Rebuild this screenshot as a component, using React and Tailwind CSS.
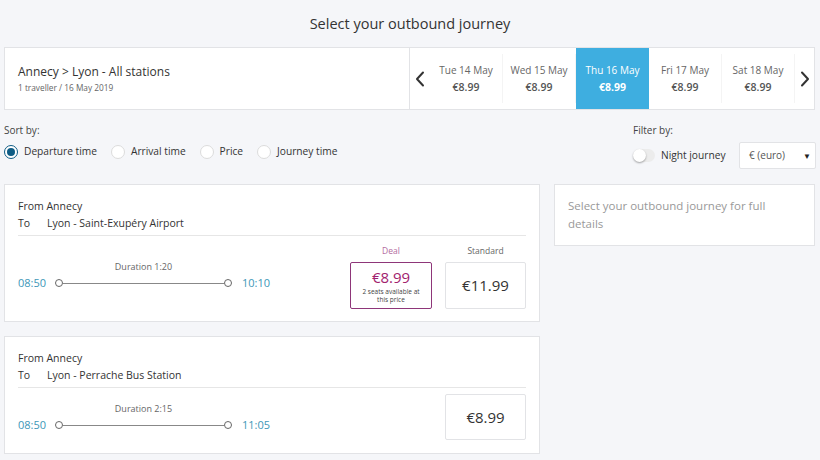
import React from "react";

const dates = [
  { d: "Tue 14 May", p: "€8.99" },
  { d: "Wed 15 May", p: "€8.99" },
  { d: "Thu 16 May", p: "€8.99", active: true },
  { d: "Fri 17 May", p: "€8.99" },
  { d: "Sat 18 May", p: "€8.99" },
];

function Chevron({ dir }) {
  return (
    <svg width="10" height="16" viewBox="0 0 10 16" fill="none">
      {dir === "left" ? (
        <polyline points="8,1.5 2,8 8,14.5" stroke="#333" strokeWidth="2" strokeLinecap="round" strokeLinejoin="round" />
      ) : (
        <polyline points="2,1.5 8,8 2,14.5" stroke="#333" strokeWidth="2" strokeLinecap="round" strokeLinejoin="round" />
      )}
    </svg>
  );
}

function Radio({ checked, label }) {
  return (
    <div className="flex items-center">
      {checked ? (
        <span className="w-[14px] h-[14px] rounded-full border-[1.5px] border-[#0e5c85] bg-white flex items-center justify-center">
          <span className="w-[8px] h-[8px] rounded-full bg-[#0e5c85]" />
        </span>
      ) : (
        <span className="w-[14px] h-[14px] rounded-full border border-[#dcdcdc] bg-white" />
      )}
      <span className="ml-[6px] text-[10.2px] text-[#333]">{label}</span>
    </div>
  );
}

function Timeline({ dep, arr, dur, mt }) {
  return (
    <div className={`self-start flex items-end ${mt}`}>
      <span className="text-[11px] leading-[12px] text-[#3d97b8] w-[37px]">{dep}</span>
      <div className="flex flex-col items-center">
        <span className="text-[9px] leading-[12px] text-[#666] mb-[4px]">{dur}</span>
        <div className="flex items-center h-[12px]">
          <span className="w-[8px] h-[8px] rounded-full border border-[#666] bg-white" />
          <span className="w-[161px] h-px bg-[#888]" />
          <span className="w-[8px] h-[8px] rounded-full border border-[#666] bg-white" />
        </div>
      </div>
      <span className="text-[11px] leading-[12px] text-[#3d97b8] ml-[10px]">{arr}</span>
    </div>
  );
}

function CardHead({ to }) {
  return (
    <>
      <div className="text-[10.5px] leading-[15px] text-[#333]">From Annecy</div>
      <div className="mt-[2px] text-[10.5px] leading-[15px] text-[#333] flex">
        <span className="w-[29px]">To</span>
        <span>{to}</span>
      </div>
      <div className="mt-[4px] h-px bg-[#e6e6e6]" />
    </>
  );
}

export default function App() {
  return (
    <div
      className="w-[820px] h-[460px] overflow-hidden bg-[#f5f6f9] text-[#333]"
      style={{ fontFamily: '"Open Sans", "Noto Sans", sans-serif' }}
    >
      <div className="h-[47px] flex items-center justify-center text-[14.5px] text-[#333]">
        Select your outbound journey
      </div>

      <div className="ml-[4px] w-[811px] h-[63px] flex border border-[#e2e3e6] bg-white">
        <div className="flex-1 flex flex-col justify-center pl-[13px]">
          <div className="text-[12px] leading-[16px] text-[#333]">Annecy &gt; Lyon - All stations</div>
          <div className="mt-[2px] text-[8.3px] leading-[12px] text-[#666]">1 traveller / 16 May 2019</div>
        </div>
        <div className="w-[405px] border-l border-[#e2e3e6] flex items-stretch">
          <div className="w-[20px] flex items-center justify-center">
            <Chevron dir="left" />
          </div>
          {dates.map((x, i) =>
            x.active ? (
              <div key={i} className="w-[73px] bg-[#3eaee0] flex flex-col items-center justify-center text-white">
                <span className="text-[10px] leading-[14px]">{x.d}</span>
                <span className="mt-[3px] text-[10.5px] leading-[14px] font-bold">{x.p}</span>
              </div>
            ) : (
              <div key={i} className="w-[73px] flex flex-col items-center justify-center py-[6px]">
                <div className="flex flex-col items-center justify-center w-full h-full border-r border-[#f4f4f4]">
                  <span className="text-[10px] leading-[14px] text-[#666]">{x.d}</span>
                  <span className="mt-[3px] text-[10.5px] leading-[14px] font-semibold text-[#555]">{x.p}</span>
                </div>
              </div>
            )
          )}
          <div className="flex-1 flex items-center justify-start pl-[5px]">
            <Chevron dir="right" />
          </div>
        </div>
      </div>

      <div className="h-[74px] flex justify-between px-[4px]">
        <div className="pt-[13px]">
          <div className="text-[10px] leading-[14px] text-[#444]">Sort by:</div>
          <div className="mt-[7px] flex items-center gap-[14px]">
            <Radio checked label="Departure time" />
            <Radio label="Arrival time" />
            <Radio label="Price" />
            <Radio label="Journey time" />
          </div>
        </div>
        <div className="pt-[13px] w-[183px]">
          <div className="text-[10px] leading-[14px] text-[#444]">Filter by:</div>
          <div className="mt-[5px] flex items-center h-[27px]">
            <span className="w-[22px] h-[13px] rounded-full bg-[#ececec] relative flex items-center">
              <span className="w-[13px] h-[13px] rounded-full bg-white shadow-[0_1px_2px_rgba(0,0,0,0.35)]" />
            </span>
            <span className="ml-[6px] text-[10.2px] text-[#333]">Night journey</span>
            <div className="ml-auto w-[77px] h-[27px] border border-[#e2e3e6] bg-white rounded-[2px] flex items-center pl-[9px] pr-[4px]">
              <span className="text-[10px] text-[#555]">€ (euro)</span>
              <span className="ml-auto text-[8px] text-[#222]">▼</span>
            </div>
          </div>
        </div>
      </div>

      <div className="flex px-[4px] gap-[14px]">
        <div className="w-[536px] flex flex-col gap-[14px]">
          <div className="bg-white border border-[#e2e3e6] pt-[14px] px-[13px] pb-[12px]">
            <CardHead to="Lyon - Saint-Exupéry Airport" />
            <div className="flex justify-between">
              <Timeline dep="08:50" arr="10:10" dur="Duration 1:20" mt="mt-[25px]" />
              <div className="flex gap-[13px]">
                <div className="flex flex-col items-center">
                  <span className="mt-[9px] text-[8.5px] leading-[12px] text-[#b36ca0]">Deal</span>
                  <div className="mt-[5px] w-[82px] h-[47px] border border-[#8e3679] rounded-[2px] flex flex-col items-center pt-[6px]">
                    <span className="text-[15px] leading-[17px] text-[#a1226e]">€8.99</span>
                    <span className="mt-[2px] text-[6.5px] leading-[7.5px] text-[#444] text-center">
                      2 seats available at<br />this price
                    </span>
                  </div>
                </div>
                <div className="flex flex-col items-center">
                  <span className="mt-[9px] text-[8.5px] leading-[12px] text-[#666]">Standard</span>
                  <div className="mt-[5px] w-[81px] h-[47px] border border-[#e2e3e6] rounded-[2px] flex items-center justify-center">
                    <span className="text-[15px] text-[#333]">€11.99</span>
                  </div>
                </div>
              </div>
            </div>
          </div>

          <div className="bg-white border border-[#e2e3e6] pt-[14px] px-[13px] pb-[13px]">
            <CardHead to="Lyon - Perrache Bus Station" />
            <div className="flex justify-between">
              <Timeline dep="08:50" arr="11:05" dur="Duration 2:15" mt="mt-[15px]" />
              <div className="mt-[6px] w-[81px] h-[46px] border border-[#e2e3e6] rounded-[2px] flex items-center justify-center">
                <span className="text-[15px] text-[#333]">€8.99</span>
              </div>
            </div>
          </div>
        </div>

        <div className="w-[261px]">
          <div className="bg-white border border-[#e2e3e6] h-[62px] px-[13px] pt-[12px] text-[11.5px] leading-[18px] text-[#999]">
            Select your outbound journey for full details
          </div>
        </div>
      </div>
    </div>
  );
}
